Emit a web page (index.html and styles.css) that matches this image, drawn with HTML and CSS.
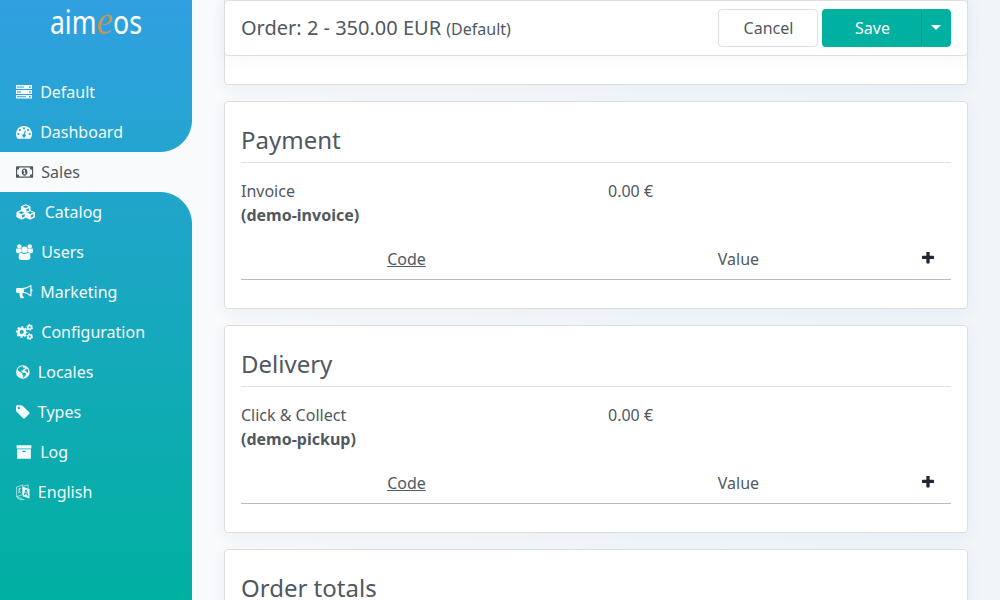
FILE: index.html
```html
<!DOCTYPE html>
<html lang="en">
<head>
<meta charset="utf-8">
<title>Aimeos</title>
<link rel="stylesheet" href="styles.css">
</head>
<body>
<div class="app">
  <aside class="sidebar">
    <div class="brand">
      <svg class="logo" width="192" height="48" viewBox="0 0 192 48">
        <text class="logo-text" x="50" y="33.700" textLength="46.500" lengthAdjust="spacingAndGlyphs">aim</text>
        <text class="logo-e" x="96.600" y="33.500" textLength="16.200" lengthAdjust="spacingAndGlyphs">e</text>
        <text class="logo-text" x="113" y="33.700" textLength="29" lengthAdjust="spacingAndGlyphs">os</text>
      </svg>
    </div>
    <nav class="menu">
      <a class="item"><svg class="icon" width="16" height="16" viewBox="0 0 16 16"><path fill-rule="evenodd" d="M0 1h16v4H0zM1 2.500v1h7v-1zM13 2.300v1.400h1.600V2.300zM0 6h16v4H0zM1 7.500v1h4v-1zM13 7.300v1.400h1.600V7.300zM0 11h16v3.500H0zM1 12.300v1h9v-1zM13 12.100v1.400h1.600v-1.400z"/></svg>Default</a>
      <a class="item"><svg class="icon" width="16" height="16" viewBox="0 0 16 16"><path fill-rule="evenodd" d="M8 2a8 8 0 0 1 6.800 12.300q-.3.400-.8.400H2q-.5 0-.8-.4A8 8 0 0 1 8 2zM2.300 8.900a1.100 1.100 0 1 0 0 2.200 1.100 1.100 0 0 0 0-2.200zM4 4.900a1.100 1.100 0 1 0 0 2.200 1.100 1.100 0 0 0 0-2.200zM8 3.200a1.100 1.100 0 1 0 0 2.200 1.100 1.100 0 0 0 0-2.200zM12 4.900a1.100 1.100 0 1 0 0 2.200 1.100 1.100 0 0 0 0-2.200zM13.700 8.900a1.100 1.100 0 1 0 0 2.200 1.100 1.100 0 0 0 0-2.200zM8.800 6.500 7.900 10a1.700 1.700 0 1 0 1.100.3l.9-3.500z"/></svg>Dashboard</a>
      <a class="item active"><svg class="icon" width="17.140" height="16" viewBox="0 0 17.140 16"><path fill-rule="evenodd" d="M.6 2.300h16q.54 0 .54.600v10.300q0 .6-.54.600H.6q-.6 0-.6-.6V2.900q0-.6.6-.6zM3.400 3.450A2.300 2.300 0 0 1 1.150 5.700v4.600a2.300 2.300 0 0 1 2.250 2.300h10.300A2.300 2.300 0 0 1 16 10.300V5.700a2.300 2.300 0 0 1-2.300-2.250zM8.570 4.400c1.800 0 2.900 1.700 2.900 3.600s-1.100 3.700-2.900 3.700S5.700 9.900 5.700 8s1.100-3.600 2.870-3.600z"/><path class="money-one" d="M8.200 5.700h.9v3.800h.8v.8H7.300v-.8h.8V7l-.7.400-.5-.7z"/></svg>Sales</a>
      <a class="item"><svg class="icon" width="20.570" height="16" viewBox="0 0 20.570 16"><path fill-rule="evenodd" d="M9.700.2 14 2q.5.300.5.900v3.300l3.900 1.700q.6.300.6.900v3.900q0 .6-.5.900l-3.700 1.900q-.5.200-1 0l-3.800-1.800L6 15.500q-.5.200-1 0l-4-2q-.6-.3-.6-.9V8.700q0-.6.6-.9l3.900-1.700V2.800q0-.6.6-.9zM9.700 1.500 6.700 2.700l3 1.300 3-1.300zM10.400 5.300v2.200L13 6.400V4.200zM5.400 7.300 2.500 8.600l2.900 1.300 2.900-1.300zM6 11.200v2.600l2.700-1.400V10zM14.200 7.300l-3 1.300 3 1.300 2.900-1.300zM14.800 11.200v2.600l2.700-1.400V10z"/></svg>Catalog</a>
      <a class="item"><svg class="icon" width="17.140" height="16" viewBox="0 0 17.140 16"><circle cx="3.400" cy="2.500" r="2.250"/><circle cx="13.700" cy="2.500" r="2.250"/><path d="M1 4.300q1 .8 2.300.8 1 0 1.700-.3-.1 2 1 3.200-1.800 0-2.900 1.200H1.700Q0 9.200 0 7.500q0-3.200 1-3.200zM16.100 4.300q-1 .8-2.300.8-1 0-1.700-.3.100 2-1 3.200 1.800 0 2.900 1.200h1.400q1.700 0 1.700-1.700 0-3.200-1-3.200z"/><circle cx="8.570" cy="5.700" r="3.200"/><path d="M4.900 8.700q.3 0 .8.400 2.800 1.900 5.700 0 .5-.4.800-.4 2.300 0 2.300 4.700 0 2.500-2.500 2.500H5.100q-2.500 0-2.500-2.500 0-4.700 2.300-4.700z"/></svg>Users</a>
      <a class="item"><svg class="icon" width="16" height="16" viewBox="0 0 16 16"><path fill-rule="evenodd" d="M14.900.9q.6.200.6.700v3.500q1 .3 1 1.300t-1 1.300v4q0 .8-.8.800-4-3.600-7.600-3.800-1.100.6-.5 1.700-.6 1 .5 1.800.4.700 1.200 1.200-1.100 1.400-3.900.6Q3.200 11 3.500 8.900H1.400Q0 8.900 0 7.500V5.400Q0 4 1.400 4h5.200Q10.500 4 14.900.9zM14.300 2.600q-3.600 2.400-6.500 2.600v2.600q3 .3 6.500 2.900z"/></svg>Marketing</a>
      <a class="item"><svg class="icon" width="17.140" height="16" viewBox="0 0 17.140 16"><circle class="gear-ring" cx="5.700" cy="8" r="3.300"/><circle class="gear-teeth" cx="5.700" cy="8" r="5"/><circle class="small-ring" cx="13.700" cy="3.400" r="1.800"/><circle class="small-teeth" cx="13.700" cy="3.400" r="2.700"/><circle class="small-ring" cx="13.700" cy="12.600" r="1.800"/><circle class="small-teeth" cx="13.700" cy="12.600" r="2.700"/></svg>Configuration</a>
      <a class="item"><svg class="icon" width="13.710" height="16" viewBox="0 0 13.710 16"><path fill-rule="evenodd" d="M6.850 1.150a6.850 6.850 0 1 1 0 13.700 6.850 6.850 0 0 1 0-13.700zM5.100 2.400Q2.900 3.100 1.800 5q.3 1.800 1.300 2.400l1.500.6.900 1 .9.300-.1 1.500 1 .9-.4 1.900 1.100-.2 1.100-1.600 1.100-1-.2-1.300-1.500-.8-1.300.1L6 7.900l-.7-.7.400-.9 1.200.2.700-1.600 1.400-.5-.8-.9-1 .3-.6-.6.900-.8q-1.200-.2-2.400 0zM9.400 5.800l-.4 1 1.400.6 1 1.300.9-.5-.2-2-1-1.600z"/></svg>Locales</a>
      <a class="item"><svg class="icon" width="13.710" height="16" viewBox="128 0 1536 1792"><path d="M576 448q0-53-37.500-90.500t-90.500-37.500-90.500 37.500-37.500 90.500 37.500 90.500 90.500 37.500 90.500-37.500 37.500-90.500zm1067 576q0 53-37 90l-491 492q-39 37-91 37-53 0-90-37l-715-716q-38-37-64.500-101t-26.500-117v-416q0-52 38-90t90-38h416q53 0 117 26.500t102 64.500l715 714q37 39 37 91z"/></svg>Types</a>
      <a class="item"><svg class="icon" width="16" height="16" viewBox="0 0 1792 1792"><path d="M1088 832q0-26-19-45t-45-19h-256q-26 0-45 19t-19 45 19 45 45 19h256q26 0 45-19t19-45zm576-192v960q0 26-19 45t-45 19h-1408q-26 0-45-19t-19-45v-960q0-26 19-45t45-19h1408q26 0 45 19t19 45zm64-448v256q0 26-19 45t-45 19h-1536q-26 0-45-19t-19-45v-256q0-26 19-45t45-19h1536q26 0 45 19t19 45z"/></svg>Log</a>
      <a class="item"><svg class="icon" width="13.710" height="16" viewBox="0 0 13.710 16"><path fill-rule="evenodd" d="M6.700 2.700 13.500 4.900v9.500L6.700 12.200zM9.500 5.400 7.900 11l1 .3.300-1.200 1.900.6.500 1.400 1 .3-2-6.600zM10 6.900l.8 2.600-1.400-.4z"/><path class="thin" d="M.5 3.200v9.500l6-2.100V1.600M.5 3.200l6-2.200 1 .4M.5 12.700l6 2M2 5.300l3-1M3.700 3.800Q4.500 7.500 2 9.500M2.200 6.500q1 2 3 2.200M1 13.800q3 2.800 7.500 1.800M7.300 2.300 12.200.8v3"/></svg>English</a>
    </nav>
  </aside>
  <main class="content">
    <header class="card toolbar">
      <h1 class="title">Order: 2 - 350.00 EUR <small class="site">(Default)</small></h1>
      <div class="actions">
        <button class="btn cancel">Cancel</button>
        <div class="group"><button class="btn save">Save</button><button class="btn toggle" aria-label="More"><span class="caret"></span></button></div>
      </div>
    </header>
    <section class="card previous"></section>
    <section class="card service">
      <h2 class="heading">Payment</h2>
      <div class="summary"><div>Invoice<br><b>(demo-invoice)</b></div><div class="price">0.00 €</div></div>
      <div class="attributes"><span class="code">Code</span><span>Value</span><svg class="plus" viewBox="192 192 1408 1408"><path d="M1600 736v192q0 40-28 68t-68 28h-416v416q0 40-28 68t-68 28h-192q-40 0-68-28t-28-68v-416h-416q-40 0-68-28t-28-68v-192q0-40 28-68t68-28h416v-416q0-40 28-68t68-28h192q40 0 68 28t28 68v416h416q40 0 68 28t28 68z"/></svg></div>
    </section>
    <section class="card service">
      <h2 class="heading">Delivery</h2>
      <div class="summary"><div>Click &amp; Collect<br><b>(demo-pickup)</b></div><div class="price">0.00 €</div></div>
      <div class="attributes"><span class="code">Code</span><span>Value</span><svg class="plus" viewBox="192 192 1408 1408"><path d="M1600 736v192q0 40-28 68t-68 28h-416v416q0 40-28 68t-68 28h-192q-40 0-68-28t-28-68v-416h-416q-40 0-68-28t-28-68v-192q0-40 28-68t68-28h416v-416q0-40 28-68t68-28h192q40 0 68 28t28 68v416h416q40 0 68 28t28 68z"/></svg></div>
    </section>
    <section class="card service">
      <h2 class="heading">Order totals</h2>
    </section>
  </main>
</div>
</body>
</html>
```
FILE: styles.css
```css
* { box-sizing: border-box; }
body {
  margin: 0;
  font: 16px/24px "Noto Sans", sans-serif;
  color: #505860;
}
.app {
  display: flex;
  height: 600px;
  overflow: hidden;
  background: linear-gradient(to right, #f8fafc 192px, #f0f5fa);
}
.sidebar {
  width: 192px;
  flex: none;
  background: linear-gradient(to bottom, #30a0e0, #00b0a0);
}
.brand { height: 72px; }
.logo { display: block; overflow: visible; }
.logo-text {
  font-family: "Noto Sans", sans-serif;
  font-size: 32px;
  fill: #fff;
}
.logo-e {
  font-family: "Liberation Serif", serif;
  font-style: italic;
  font-size: 42px;
  fill: #b89860;
}
.menu { display: flex; flex-direction: column; }
.item {
  display: flex;
  align-items: center;
  gap: 8.160px;
  height: 40px;
  padding-left: 16px;
  color: #f4fbff;
}
.icon { fill: currentColor; overflow: visible; flex: none; }
.active {
  position: relative;
  background: #f8fafc;
  color: #505860;
}
.active::before,
.active::after {
  content: "";
  position: absolute;
  right: 0;
  width: 32px;
  height: 32px;
}
.active::before {
  bottom: 100%;
  background: radial-gradient(circle at 0 0, transparent 31.500px, #f8fafc 32.500px);
}
.active::after {
  top: 100%;
  background: radial-gradient(circle at 0 100%, transparent 31.500px, #f8fafc 32.500px);
}
.money-one { fill: #f8fafc; }
.gear-ring { fill: none; stroke: currentColor; stroke-width: 2.600; }
.gear-teeth { fill: none; stroke: currentColor; stroke-width: 1.600; stroke-dasharray: 2.200 1.727; stroke-dashoffset: 1.100; }
.small-ring { fill: none; stroke: currentColor; stroke-width: 1.500; }
.small-teeth { fill: none; stroke: currentColor; stroke-width: 1.200; stroke-dasharray: 1.500 1.327; }
.thin { fill: none; stroke: currentColor; stroke-width: .6; }
.content {
  flex: 1;
  display: flex;
  flex-direction: column;
  gap: 16px;
  padding: 0 32px;
}
.card {
  flex: none;
  padding: 0 16px;
  background: #fff;
  border: 1px solid #dcdee0;
  border-radius: 4px;
  box-shadow: 0 4px 16px rgba(48, 80, 96, .06);
}
.toolbar {
  position: relative;
  z-index: 1;
  display: flex;
  align-items: center;
  justify-content: space-between;
  height: 56px;
  box-shadow: 0 4px 16px rgba(48, 80, 96, .04);
}
.title { margin: 0; font-size: 20px; font-weight: 400; }
.site { font-size: 16px; }
.actions { display: flex; gap: 4px; }
.group { display: flex; }
.btn {
  height: 38px;
  padding: 0;
  border: 1px solid #00b0a0;
  border-radius: 4px;
  background: #00b0a0;
  color: #fff;
  font: inherit;
}
.cancel { width: 100px; padding-left: 1px; background: #fff; border-color: #dcdfe6; color: #505860; }
.save { width: 100px; padding-left: 1px; border-right-color: #009c91; border-radius: 4px 0 0 4px; }
.toggle {
  display: flex;
  align-items: center;
  justify-content: center;
  width: 29px;
  padding-right: 1px;
  border-radius: 0 4px 4px 0;
}
.caret { border: 5px solid transparent; border-top-color: #fff; border-bottom: 0; margin-bottom: 2px; }
.previous { height: 89px; margin-top: -76px; }
.service { height: 208px; padding-top: 20px; }
.heading {
  height: 41px;
  margin: 0 0 16px;
  padding-top: 2px;
  border-bottom: 1px solid #e0e2e4;
  font-size: 24px;
  line-height: 32px;
  font-weight: 400;
}
.summary { display: grid; grid-template-columns: 367px 1fr; }
.attributes {
  display: grid;
  grid-template-columns: 331px 333px 46px;
  align-items: center;
  justify-items: center;
  height: 41px;
  margin-top: 12px;
  border-bottom: 1px solid #b8babc;
}
.code { text-decoration: underline; }
.plus { width: 12px; height: 12px; margin-bottom: 3px; fill: #1e2830; }
```
